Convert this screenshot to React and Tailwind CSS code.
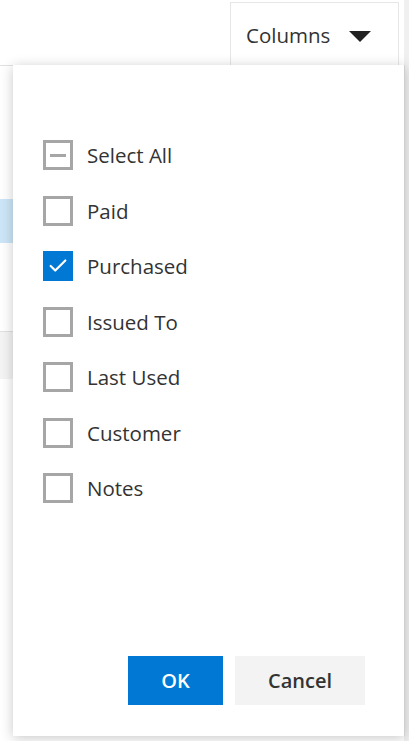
import { Check } from "lucide-react";

const options = [
    { label: "Select All", state: "partial" },
    { label: "Paid", state: "off" },
    { label: "Purchased", state: "on" },
    { label: "Issued To", state: "off" },
    { label: "Last Used", state: "off" },
    { label: "Customer", state: "off" },
    { label: "Notes", state: "off" },
];

const Box = ({ state }) => {
    if (state === "on") {
        return (
            <span className="w-[30px] h-[30px] bg-[#0078d4] flex items-center justify-center shrink-0">
                <Check size={22} strokeWidth={2.4} className="text-white" />
            </span>
        );
    }
    return (
        <span className="w-[30px] h-[30px] border-[3px] border-[#a6a6a6] flex items-center justify-center shrink-0">
            {state === "partial" && <span className="w-[16px] h-[3px] bg-[#a6a6a6]" />}
        </span>
    );
};

export default function App() {
    return (
        <div
            className="relative w-[409px] h-[741px] overflow-hidden bg-white flex text-[#333]"
            style={{ fontFamily: '"Open Sans", "Noto Sans", sans-serif' }}
        >
            <div className="flex-1 flex flex-col">
                <div className="h-[65px] flex justify-end pr-[5px] pt-[2px]">
                    <div className="w-[169px] border-t border-l border-r border-[#e6e6e6] flex items-start pl-[15px] pt-[18px] gap-[18px]">
                        <span className="text-[20.5px] leading-[28px]">Columns</span>
                        <svg width="24" height="12" viewBox="0 0 24 12" className="mt-[10px]">
                            <path d="M1 0 L23 0 L12 11 Z" fill="#222" />
                        </svg>
                    </div>
                </div>
                <div className="border-t border-[#e1e1e1] h-[134px]" />
                <div className="h-[44px] bg-[#cde6f7]" />
                <div className="h-[88px]" />
                <div className="h-[48px] bg-[#f4f4f4] border-t border-[#e1e1e1]" />
            </div>
            <div className="w-[5px] bg-[#f0f0f0]" />

            <div className="absolute left-[13px] top-[65px] w-[392px] h-[671px] bg-white border-r border-[#cfcfcf] shadow-[0_2px_12px_rgba(0,0,0,0.22)] flex flex-col">
                <div className="flex flex-col pt-[75px] pl-[30px] gap-[25.5px]">
                    {options.map((o) => (
                        <label key={o.label} className="flex items-center gap-[14px] h-[30px]">
                            <Box state={o.state} />
                            <span className="text-[20.5px] leading-[28px]">{o.label}</span>
                        </label>
                    ))}
                </div>
                <div className="mt-auto mb-[31px] flex gap-[12px] pl-[115px]">
                    <button className="w-[95px] h-[49px] bg-[#0078d4] text-white text-[20px] font-semibold">
                        OK
                    </button>
                    <button className="w-[130px] h-[49px] bg-[#f3f3f3] text-[#333] text-[20px] font-semibold">
                        Cancel
                    </button>
                </div>
            </div>
        </div>
    );
}
